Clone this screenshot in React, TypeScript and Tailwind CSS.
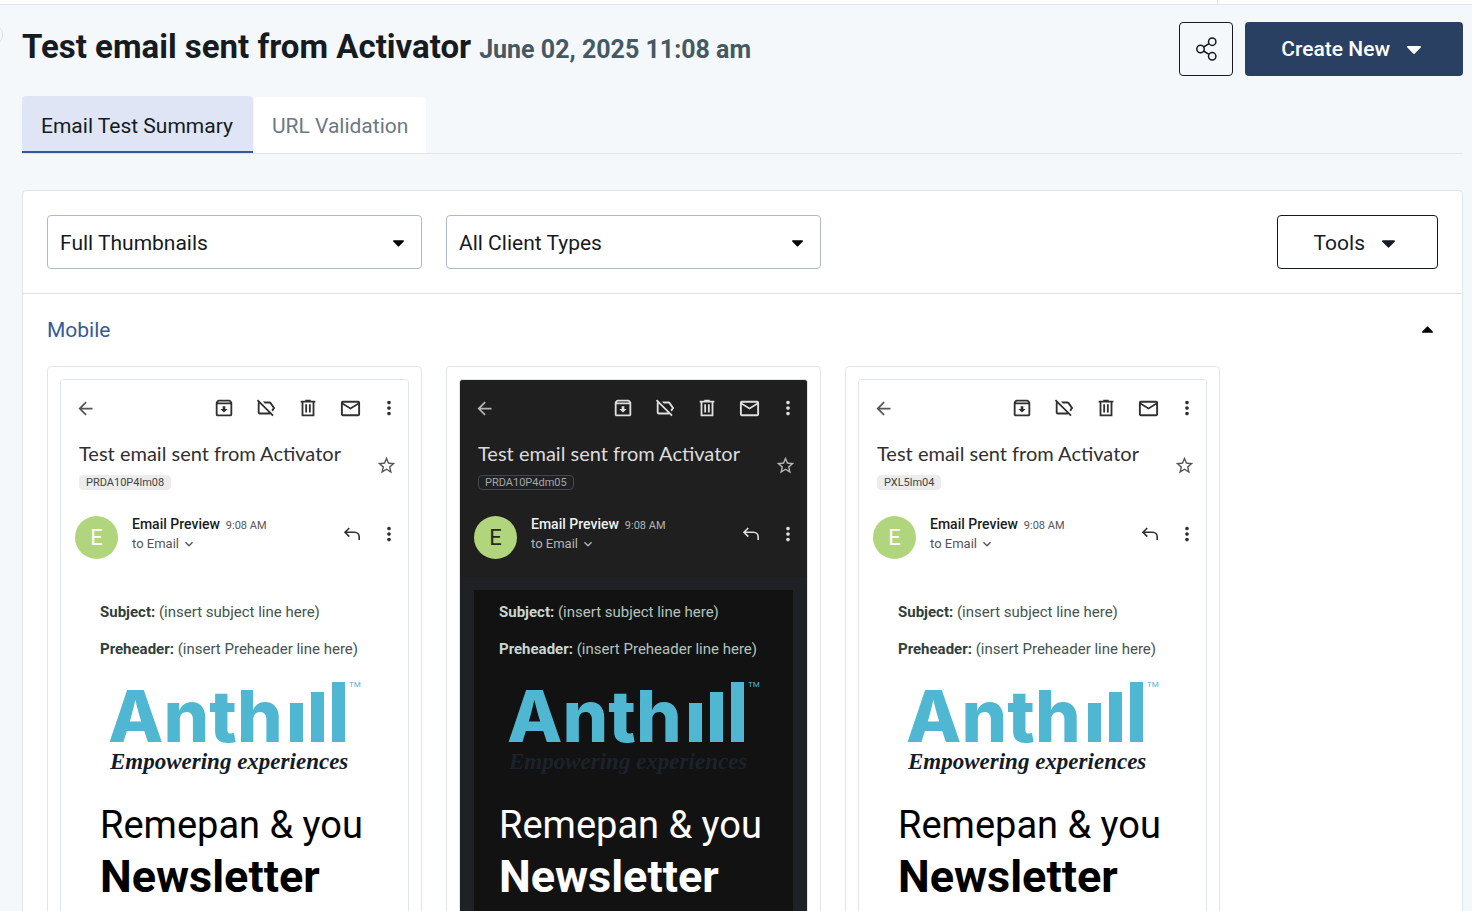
import { useState } from "react";
import {
  MdArrowBack,
  MdKeyboardArrowDown,
  MdMailOutline,
  MdMoreVert,
  MdOutlineArchive,
  MdOutlineLabelOff,
  MdStarOutline,
} from "react-icons/md";

type Preview = { id: string; dark?: boolean };

const previews: Preview[] = [
  { id: "PRDA10P4lm08" },
  { id: "PRDA10P4dm05", dark: true },
  { id: "PXL5lm04" },
];

function Caret({ className = "" }: { className?: string }) {
  return (
    <svg viewBox="0 0 14 8" aria-hidden className={className}>
      <path d="M1 0h12c.9 0 1.300 1 .7 1.600L7.800 7.600a1.100 1.100 0 0 1-1.600 0L.3 1.600C-.3 1 .1 0 1 0z" fill="currentColor" />
    </svg>
  );
}

function ShareIcon() {
  return (
    <svg viewBox="0 0 24 26" aria-hidden className="h-[26px] w-6" fill="none" stroke="currentColor" strokeWidth="1.500">
      <circle cx="6.500" cy="13" r="3.700" />
      <circle cx="18.200" cy="5.700" r="3.700" />
      <circle cx="18.200" cy="20.300" r="3.700" />
      <path d="M9.600 11l5.400-3.400M9.600 15l5.400 3.400" />
    </svg>
  );
}

function TrashIcon() {
  return (
    <svg viewBox="0 0 24 24" aria-hidden className="h-[22px] w-[22px]" fill="none" stroke="currentColor" strokeWidth="2">
      <path d="M4 5h16M9 4h6M6 5v15h12V5M10 8v9M14 8v9" />
    </svg>
  );
}

function ReplyIcon() {
  return (
    <svg viewBox="0 0 18 18" aria-hidden className="h-[18px] w-[18px]" fill="none" stroke="currentColor" strokeWidth="1.600">
      <path d="M6.300 3L2 7.300l4.300 4.300M2 7.300h9.500a4.700 4.700 0 0 1 4.700 4.700v3" />
    </svg>
  );
}

function SelectBox({ label, options }: { label: string; options: string[] }) {
  return (
    <div className="relative w-[375px]">
      <select
        aria-label={label}
        className="h-[54px] w-full appearance-none rounded border border-[#b0bac3] bg-white px-3 pt-[3px] text-[21px] text-[#151b21]"
      >
        {options.map((option) => (
          <option key={option}>{option}</option>
        ))}
      </select>
      <Caret className="pointer-events-none absolute right-[18px] top-[25px] h-[7px] w-[11px] text-black" />
    </div>
  );
}

function AnthillLogo({ dark }: { dark?: boolean }) {
  return (
    <div className="mt-[23px] pl-2">
      <div className="flex items-baseline text-[#4fb7d2]">
        <span className="w-[182px] whitespace-nowrap font-[Inter,sans-serif] text-[72px] font-extrabold leading-[60px]">
          Anth
        </span>
        {/* the stepped "ill" of the logo */}
        <span className="h-[39px] w-[13px] bg-current" />
        <span className="ml-2 h-[50px] w-[13px] bg-current" />
        <span className="ml-2 h-[60px] w-[13px] bg-current" />
        <span className="ml-1 self-start text-[8px] leading-[6px]">TM</span>
      </div>
      <p
        className={`mt-1 whitespace-nowrap pl-0.5 font-['Liberation_Serif',serif] text-[23px] font-bold italic leading-6 ${
          dark ? "text-[#1b222c]" : "text-[#131c28]"
        }`}
      >
        Empowering experiences
      </p>
    </div>
  );
}

function EmailPreview({ id, dark }: Preview) {
  const icon = dark ? "text-[#dedede]" : "text-[#303030]";
  const muted = dark ? "text-[#b5b5b5]" : "text-[#555555]";

  return (
    <article className="w-[375px] rounded border border-[#e2e5e8] bg-white p-3">
      <div
        className={`min-h-[640px] overflow-hidden rounded border border-[#e2e5e8] ${
          dark ? "bg-[#202124]" : "bg-white"
        }`}
      >
        <header className={`h-[197px] ${dark ? "bg-[#1f1f1f]" : "bg-white"}`}>
          <div className={`flex h-14 items-center justify-between pl-[14px] pr-2 ${icon}`}>
            <MdArrowBack className={`h-[21px] w-[21px] ${muted}`} />
            <div className="flex items-center gap-5">
              <MdOutlineArchive className="h-[22px] w-[22px]" />
              <MdOutlineLabelOff className="h-[22px] w-[22px]" />
              <TrashIcon />
              <MdMailOutline className="h-[23px] w-[23px]" />
              <MdMoreVert className="-ml-1 h-[22px] w-[22px]" />
            </div>
          </div>

          <div className="flex items-center justify-between pl-[18px] pr-[11px] pt-[5px]">
            <div>
              <h3
                className={`whitespace-nowrap font-[Lato,sans-serif] text-[20px] leading-6 ${
                  dark ? "text-[#dcdcdc]" : "text-[#303030]"
                }`}
              >
                Test email sent from Activator
              </h3>
              <span
                className={`mt-2.5 inline-block rounded border px-1.5 align-top text-[11px] leading-[13px] ${
                  dark
                    ? "border-[#45474c] bg-[#202124] text-[#a5a5a5]"
                    : "border-[#ececec] bg-[#ececec] text-[#444444]"
                }`}
              >
                {id}
              </span>
            </div>
            <MdStarOutline className={`h-[21px] w-[21px] ${muted}`} />
          </div>

          <div className="mt-6 flex items-center pl-[14px] pr-2">
            <span
              className={`flex h-[43px] w-[43px] items-center justify-center rounded-full bg-[#b0d57c] text-[22px] ${
                dark ? "text-[#262b1d]" : "text-white"
              }`}
            >
              E
            </span>
            <div className="ml-[14px] flex-1 pb-1.5">
              <p className="flex h-5 items-baseline gap-1.5 whitespace-nowrap text-[14px] font-medium leading-5">
                <span className={dark ? "text-[#f0f0f0]" : "text-[#1c1c1c]"}>Email Preview</span>
                <span className={`text-[11px] font-normal ${muted}`}>9:08 AM</span>
              </p>
              <p className={`flex h-5 items-center gap-0.5 text-[13px] leading-5 ${muted}`}>
                to Email
                <MdKeyboardArrowDown className="h-4 w-4" />
              </p>
            </div>
            <div className={`flex items-center gap-[17px] pb-1.5 ${icon}`}>
              <ReplyIcon />
              <MdMoreVert className="h-[22px] w-[22px]" />
            </div>
          </div>
        </header>

        <div
          className={`mx-[14px] mt-[13px] min-h-[440px] pl-[25px] pt-3 ${
            dark ? "bg-[#121212] text-white" : "bg-white text-black"
          }`}
        >
          <div
            className={`flex flex-col gap-[17px] whitespace-nowrap text-[15px] leading-5 ${
              dark ? "text-[#b4c4bd]" : "text-[#43544e]"
            }`}
          >
            <p>
              <strong className={dark ? "text-[#c8d8d0]" : "text-[#2f403a]"}>Subject:</strong> (insert subject line
              here)
            </p>
            <p>
              <strong className={dark ? "text-[#c8d8d0]" : "text-[#2f403a]"}>Preheader:</strong> (insert Preheader
              line here)
            </p>
          </div>
          <AnthillLogo dark={dark} />
          <h4 className="mt-[26px] whitespace-nowrap">
            <span className="block text-[38px] leading-[50px]">Remepan &amp; you</span>
            <span className="block text-[45px] font-bold leading-[54px]">Newsletter</span>
          </h4>
        </div>
      </div>
    </article>
  );
}

export default function App() {
  const [open, setOpen] = useState(true);

  return (
    <div className="relative h-screen overflow-hidden bg-[#f4f8fb] font-[Roboto,sans-serif] text-[#151b21]">
      <div className="flex h-[5px] justify-end border-b border-[#dfe5ea] bg-white">
        <div className="w-[255px] border-l border-[#dfe5ea]" />
      </div>
      <span
        aria-hidden
        className="absolute -left-[21px] top-[23px] h-6 w-6 rounded-full border border-[#dfe3e6] bg-[#f7f8f9]"
      />

      <main className="pl-[22px] pr-[9px] pt-[17px]">
        <div className="flex justify-between">
          <h1 className="flex items-baseline gap-2 whitespace-nowrap text-[33px] font-bold leading-[49px]">
            Test email sent from Activator
            <small className="text-[25px] font-bold text-[#465862]">June 02, 2025 11:08 am</small>
          </h1>
          <div className="flex gap-3">
            <button
              type="button"
              aria-label="Share"
              className="flex h-[54px] w-[54px] items-center justify-center rounded border border-[#151b21]"
            >
              <ShareIcon />
            </button>
            <button
              type="button"
              className="flex h-[54px] items-center gap-[17px] rounded bg-[#294063] pl-9 pr-[42px] pt-0.5 text-[21px] font-medium text-white"
            >
              Create New
              <Caret className="h-2 w-[14px]" />
            </button>
          </div>
        </div>

        <div role="tablist" className="mt-5 flex items-end gap-px border-b border-[#dfe5ea] text-[21px]">
          <button
            type="button"
            role="tab"
            aria-selected="true"
            className="h-[57px] rounded-t border-b-2 border-[#355a9c] bg-[#e0e5f5] pl-[19px] pr-5 pt-1.5"
          >
            Email Test Summary
          </button>
          <button
            type="button"
            role="tab"
            aria-selected="false"
            className="h-14 rounded-t bg-white px-[18px] pt-1 text-[#6b7983]"
          >
            URL Validation
          </button>
        </div>

        <section className="mt-9 rounded border border-[#dfe5ea] bg-white">
          <div className="flex items-center justify-between border-b border-[#dfe3e6] p-6">
            <div className="flex gap-6">
              <SelectBox label="Thumbnail size" options={["Full Thumbnails", "Small Thumbnails"]} />
              <SelectBox label="Client type" options={["All Client Types", "Mobile", "Desktop", "Web"]} />
            </div>
            <button
              type="button"
              className="flex h-[54px] items-center gap-[17px] rounded border border-[#151b21] pl-9 pr-[42px] pt-[3px] text-[21px]"
            >
              Tools
              <Caret className="h-2 w-[13px]" />
            </button>
          </div>

          <button
            type="button"
            aria-expanded={open}
            onClick={() => setOpen(!open)}
            className="flex h-[72px] w-full items-center justify-between pl-6 pr-[29px] pt-0.5 text-[21px] text-[#355a9c]"
          >
            Mobile
            <Caret
              className={open ? "mb-1 h-[7px] w-[11px] rotate-180 text-black" : "mb-1 h-[7px] w-[11px] text-black"}
            />
          </button>
          {open && (
            <div className="flex flex-wrap gap-6 px-6 pb-6">
              {previews.map((preview) => (
                <EmailPreview key={preview.id} {...preview} />
              ))}
            </div>
          )}
        </section>
      </main>
    </div>
  );
}
